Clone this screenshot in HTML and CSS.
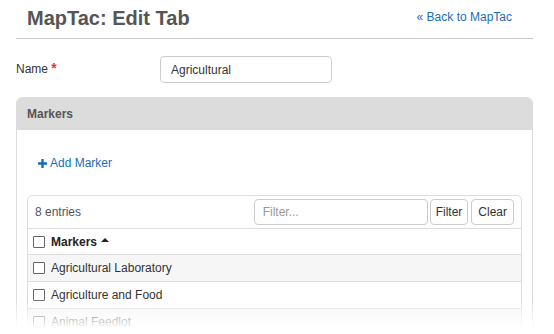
FILE: index.html
```html
<!DOCTYPE html>
<html lang="en">
<head>
  <meta charset="UTF-8">
  <title>MapTac: Edit Tab</title>
  <meta name="viewport" content="width=device-width, initial-scale=1.0">
  <link rel="stylesheet" href="styles.css">
</head>
<body>
  <div class="page">
    <div class="page-header">
      <h1>MapTac: Edit Tab</h1>
      <a class="back-link" href="#">&laquo; Back to MapTac</a>
    </div>

    <form class="edit-form">
      <div class="field-row">
        <label for="tab-name">Name <span class="req">*</span></label>
        <input id="tab-name" class="text-input" type="text" value="Agricultural">
      </div>

      <div class="panel">
        <div class="panel-heading">Markers</div>
        <div class="panel-body">
          <a class="add-link" href="#">
            <svg width="9" height="9" viewBox="0 0 9 9"><path d="M4.5 0v9M0 4.5h9" stroke="currentColor" stroke-width="2.4"/></svg>
            Add Marker
          </a>

          <!-- lista de marcadores -->
          <div class="grid-box">
            <div class="grid-toolbar">
              <span class="count">8 entries</span>
              <div class="filter">
                <input class="filter-input" type="text" placeholder="Filter...">
                <button type="button" class="btn">Filter</button>
                <button type="button" class="btn btn-clear">Clear</button>
              </div>
            </div>
            <div class="grid-row grid-head">
              <span class="check"></span>
              <span>Markers</span>
              <span class="sort-up"></span>
            </div>
            <div class="grid-row odd"><span class="check"></span><span>Agricultural Laboratory</span></div>
            <div class="grid-row"><span class="check"></span><span>Agriculture and Food</span></div>
            <div class="grid-row odd"><span class="check"></span><span>Animal Feedlot</span></div>
          </div>
        </div>
      </div>
    </form>

    <div class="fade"></div>
  </div>
</body>
</html>
```

FILE: styles.css
```css
body {
  margin: 0;
  height: 334px;
  overflow: hidden;
  background: #fff;
  font-family: 'Liberation Sans', Arial, sans-serif;
  font-size: 12px;
  color: #333;
}
.page {
  padding: 0 21px 0 16px;
}
.page-header {
  display: flex;
  justify-content: space-between;
  align-items: flex-start;
  height: 39px;
  box-sizing: border-box;
  padding: 6px 21px 0 11px;
  border-bottom: 1px solid #c8c8c8;
}
h1 {
  margin: 0;
  font-size: 20px;
  line-height: 24px;
  font-weight: bold;
  color: #555;
}
.back-link {
  margin-top: 4px;
  line-height: 14px;
  color: #1a6db5;
  text-decoration: none;
}
.field-row {
  display: flex;
  align-items: flex-start;
  margin-top: 17px;
}
.field-row label {
  width: 144px;
  padding-top: 5px;
  line-height: 14px;
  color: #333;
}
.req {
  color: #e03c31;
  font-weight: bold;
  font-size: 14px;
}
.text-input {
  width: 172px;
  height: 27px;
  box-sizing: border-box;
  padding: 0 10px;
  border: 1px solid #ccc;
  border-radius: 4px;
  font-family: inherit;
  font-size: 12px;
  color: #333;
}
.panel {
  margin-top: 14px;
  border: 1px solid #ddd;
  border-radius: 6px;
}
.panel-heading {
  height: 32px;
  line-height: 32px;
  padding-left: 10px;
  background: #dcdcdc;
  border-radius: 5px 5px 0 0;
  font-weight: bold;
  color: #555;
}
.panel-body {
  padding: 0 10px 10px 10px;
}
.add-link {
  display: flex;
  align-items: center;
  gap: 3px;
  margin: 26px 0 25px 11px;
  line-height: 14px;
  color: #1a6db5;
  text-decoration: none;
  width: max-content;
}
.grid-box {
  border: 1px solid #ddd;
  border-radius: 5px;
}
.grid-toolbar {
  display: flex;
  justify-content: space-between;
  align-items: center;
  padding: 3px 7px 3px 7px;
  border-bottom: 1px solid #ddd;
}
.count {
  color: #555;
}
.filter {
  display: flex;
  gap: 2px;
}
.filter-input {
  width: 174px;
  height: 26px;
  box-sizing: border-box;
  padding: 0 8px;
  border: 1px solid #ccc;
  border-radius: 4px;
  font-family: inherit;
  font-size: 12px;
}
.filter-input::placeholder {
  color: #999;
}
.btn {
  height: 26px;
  padding: 0 5px;
  background: #fff;
  border: 1px solid #ccc;
  border-radius: 4px;
  font-family: inherit;
  font-size: 12px;
  color: #333;
}
.btn-clear {
  margin-left: 1px;
  padding: 0 6px;
}
.grid-row {
  display: flex;
  align-items: center;
  height: 26px;
  padding-left: 5px;
  border-bottom: 1px solid #ddd;
  color: #333;
}
.grid-head {
  height: 25px;
  font-weight: bold;
  color: #222;
}
.grid-row.odd {
  background: #f6f6f6;
}
.check {
  width: 10px;
  height: 10px;
  border: 1px solid #666;
  border-radius: 1px;
  background: #fff;
  margin-right: 6px;
}
.sort-up {
  width: 0;
  height: 0;
  margin: 0 0 4px 4px;
  border-left: 4px solid transparent;
  border-right: 4px solid transparent;
  border-bottom: 4px solid #222;
}
/* corte suave no fim da imagem */
.fade {
  position: absolute;
  left: 0;
  right: 0;
  top: 298px;
  height: 36px;
  background: linear-gradient(rgba(255,255,255,0) 0%, #fff 85%);
}
```
